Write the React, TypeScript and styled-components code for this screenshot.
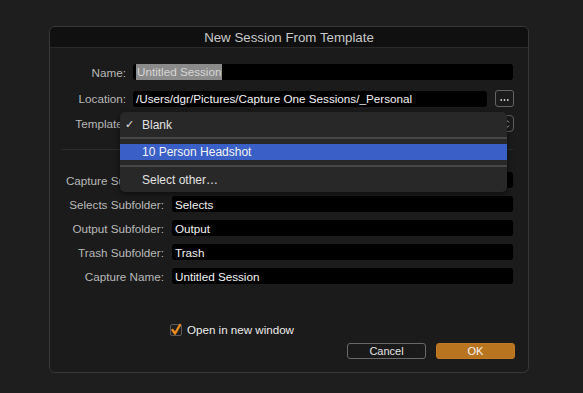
import styled, { createGlobalStyle } from "styled-components";

const GlobalStyle = createGlobalStyle`
  html, body {
    margin: 0;
    padding: 0;
    background: #1e1e1e;
  }
  body {
    font-family: "Liberation Sans", Arial, sans-serif;
    -webkit-font-smoothing: antialiased;
  }
`;

const Page = styled.div`
  width: 583px;
  height: 393px;
  padding: 26px 0 0 49px;
  box-sizing: border-box;
`;

const Dialog = styled.div`
  position: relative;
  width: 480px;
  height: 347px;
  box-sizing: border-box;
  background: #1b1b1b;
  border: 1px solid #383838;
  border-radius: 6px;
  display: flex;
  flex-direction: column;
`;

const TitleBar = styled.div`
  height: 20px;
  background: #101010;
  border-bottom: 1px solid #2a2a2a;
  border-radius: 5px 5px 0 0;
  display: flex;
  align-items: center;
  justify-content: center;
  color: #c8c8c8;
  font-size: 13.3px;
`;

const Body = styled.div`
  padding: 16px 15px 0 0;
  display: flex;
  flex-direction: column;
`;

const Section = styled.div<{ $gap: number }>`
  display: flex;
  flex-direction: column;
  gap: ${(p) => p.$gap}px;
`;

const Row = styled.div`
  display: flex;
  align-items: center;
`;

const Label = styled.div<{ $width: number; $gap: number }>`
  width: ${(p) => p.$width}px;
  margin-right: ${(p) => p.$gap}px;
  flex: none;
  text-align: right;
  white-space: nowrap;
  color: #b8b8b8;
  font-size: 11.7px;
`;

const Field = styled.div`
  flex: 1;
  height: 16px;
  background: #000;
  border-radius: 3px;
  display: flex;
  align-items: center;
  padding: 0 3px;
  color: #f2f2f2;
  font-size: 11.7px;
  white-space: nowrap;
  overflow: hidden;
`;

const Selected = styled.span`
  background: #8b8b8b;
  color: #d6d6d6;
  height: 16px;
  line-height: 16px;
  padding: 0 1px;
`;

const BrowseButton = styled.div`
  flex: none;
  width: 17px;
  height: 15px;
  margin-left: 8px;
  margin-right: -1px;
  border: 1px solid #646464;
  border-radius: 3px;
  display: flex;
  align-items: center;
  justify-content: center;
`;

const PopupButton = styled.div`
  flex: 1;
  height: 15px;
  margin-right: -1px;
  border: 1px solid #5e5e5e;
  border-radius: 4px;
  display: flex;
  align-items: center;
  justify-content: flex-end;
  padding-right: 3px;
`;

const Divider = styled.div`
  height: 1px;
  background: #2c2c2c;
  margin: 17px 0 22px 11px;
`;

const CheckRow = styled.div`
  display: flex;
  align-items: center;
  gap: 5px;
  margin-top: 39px;
  padding-left: 120px;
  color: #ececec;
  font-size: 11.6px;
`;

const CheckBox = styled.div`
  position: relative;
  width: 10px;
  height: 10px;
  border: 1px solid #5a5a5a;
  border-radius: 2px;
  background: #1f1f1f;
`;

const Buttons = styled.div`
  display: flex;
  justify-content: flex-end;
  gap: 10px;
  margin-top: 7px;
  margin-right: -2px;
`;

const Button = styled.div<{ $primary?: boolean }>`
  width: 77px;
  height: 14px;
  border-radius: 3px;
  border: 1px solid ${(p) => (p.$primary ? "#c07a26" : "#686868")};
  background: ${(p) => (p.$primary ? "#b8741f" : "#1a1a1a")};
  color: ${(p) => (p.$primary ? "#f4f4f4" : "#e4e4e4")};
  font-size: 11px;
  display: flex;
  align-items: center;
  justify-content: center;
`;

const Menu = styled.div`
  position: absolute;
  left: 70px;
  top: 85px;
  width: 387px;
  padding: 4px 0;
  background: #282828;
  border-radius: 5px;
  box-shadow: 0 2px 6px rgba(0, 0, 0, 0.5);
  color: #e2e2e2;
  font-size: 12px;
`;

const MenuItem = styled.div<{ $active?: boolean; $height: number }>`
  position: relative;
  height: ${(p) => p.$height}px;
  display: flex;
  align-items: center;
  padding-left: 22px;
  background: ${(p) => (p.$active ? "#3a5fc6" : "transparent")};
  color: ${(p) => (p.$active ? "#f4f4f4" : "#e2e2e2")};
`;

const Check = styled.span`
  position: absolute;
  left: 5px;
  font-family: "DejaVu Sans", sans-serif;
  font-size: 11px;
`;

const MenuSeparator = styled.div<{ $top: number; $bottom: number }>`
  height: 2px;
  background: #464646;
  margin: ${(p) => p.$top}px 0 ${(p) => p.$bottom}px;
`;

const topLabel = 76;
const bottomLabel = 114;

const subfolders = [
  ["Capture Subfolder:", ""],
  ["Selects Subfolder:", "Selects"],
  ["Output Subfolder:", "Output"],
  ["Trash Subfolder:", "Trash"],
  ["Capture Name:", "Untitled Session"],
];

function UpDown() {
  return (
    <svg width="6" height="10" viewBox="0 0 6 10">
      <path d="M1 3.5 L3 1.5 L5 3.5 M1 6.5 L3 8.5 L5 6.5" fill="none" stroke="#cfcfcf" strokeWidth="1" />
    </svg>
  );
}

function Dots() {
  return (
    <svg width="9" height="4" viewBox="0 0 9 4" style={{ marginTop: 3 }}>
      <circle cx="1.2" cy="2" r="0.9" fill="#d6d6d6" />
      <circle cx="4.5" cy="2" r="0.9" fill="#d6d6d6" />
      <circle cx="7.8" cy="2" r="0.9" fill="#d6d6d6" />
    </svg>
  );
}

function Tick() {
  return (
    <svg width="12" height="13" viewBox="0 0 12 13" style={{ position: "absolute", left: -1, top: -2 }}>
      <path d="M2.5 7 L5 10.5 L10 2" fill="none" stroke="#eb8c1e" strokeWidth="2.4" strokeLinecap="round" strokeLinejoin="round" />
    </svg>
  );
}

export default function App() {
  return (
    <>
      <GlobalStyle />
      <Page>
        <Dialog>
          <TitleBar>New Session From Template</TitleBar>
          <Body>
            <Section $gap={10}>
              <Row>
                <Label $width={topLabel} $gap={7}>Name:</Label>
                <Field>
                  <Selected>Untitled Session</Selected>
                </Field>
              </Row>
              <Row>
                <Label $width={topLabel} $gap={7}>Location:</Label>
                <Field>/Users/dgr/Pictures/Capture One Sessions/_Personal</Field>
                <BrowseButton>
                  <Dots />
                </BrowseButton>
              </Row>
              <Row style={{ marginTop: -2 }}>
                <Label $width={topLabel} $gap={7}>Template:</Label>
                <PopupButton>
                  <UpDown />
                </PopupButton>
              </Row>
            </Section>
            <Divider />
            <Section $gap={8}>
              {subfolders.map(([label, value]) => (
                <Row key={label}>
                  <Label $width={bottomLabel} $gap={8}>{label}</Label>
                  <Field>{value}</Field>
                </Row>
              ))}
            </Section>
            <CheckRow>
              <CheckBox>
                <Tick />
              </CheckBox>
              Open in new window
            </CheckRow>
            <Buttons>
              <Button>Cancel</Button>
              <Button $primary>OK</Button>
            </Buttons>
          </Body>
          <Menu>
            <MenuItem $height={17}>
              <Check>✓</Check>
              Blank
            </MenuItem>
            <MenuSeparator $top={4} $bottom={5} />
            <MenuItem $height={16} $active>
              10 Person Headshot
            </MenuItem>
            <MenuSeparator $top={5} $bottom={4} />
            <MenuItem $height={17}>Select other…</MenuItem>
          </Menu>
        </Dialog>
      </Page>
    </>
  );
}
